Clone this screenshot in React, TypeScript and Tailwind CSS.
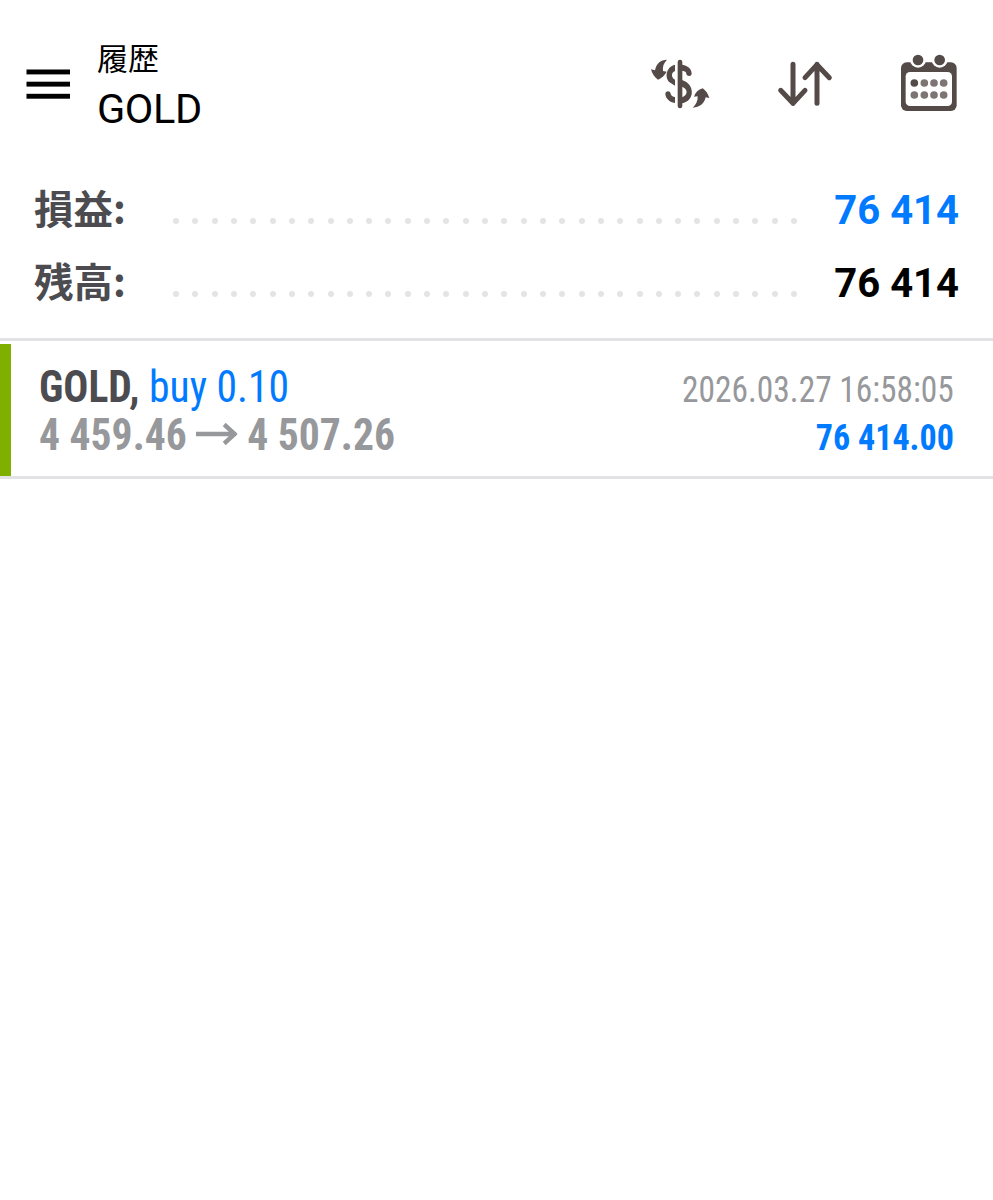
import type { ReactNode } from 'react';

interface SummaryRowProps {
  label: string;
  value: string;
  valueClass: string;
}

const DOT_COUNT = 33;

function MenuIcon() {
  return (
    <svg className="h-[30px] w-[44px]" viewBox="0 0 44 30" fill="#000">
      <rect x="0.5" y="0.5" width="43.5" height="4.9" />
      <rect x="0.5" y="12.7" width="43.5" height="4.9" />
      <rect x="0.5" y="24.8" width="43.5" height="4.9" />
    </svg>
  );
}

function CurrencyIcon() {
  return (
    <svg className="h-[75px] w-[80px]" viewBox="0 0 240 225" fill="none">
      <path d="M120 51V183" stroke="#544a48" strokeWidth="14" strokeLinecap="round" />
      <path d="M105 59C78 65 72 101 91 113L105 122V104C92 97 94 82 105 78Z" fill="#544a48" />
      <path d="M126 59C146 62 155 73 155 86C154 95 141 95 139 87C139 81 136 78 126 77Z" fill="#544a48" />
      <path d="M126 105C166 117 165 168 126 175V157C145 150 144 131 126 125Z" fill="#544a48" />
      <path d="M105 174C88 172 77 160 76 147C76 137 90 136 92 146C93 151 98 155 105 156Z" fill="#544a48" />
      <path d="M81 44C62 44 49 55 45 76L33 73C36 86 43 96 54 104C66 99 74 91 80 80L69 78C67 64 72 53 81 44Z" fill="#544a48" />
      <path d="M158 188C168 179 174 168 173 154L162 155C166 142 175 134 188 130C198 137 204 146 208 159L197 157C193 176 179 187 158 188Z" fill="#544a48" />
    </svg>
  );
}

function SortIcon() {
  return (
    <svg
      className="h-[75px] w-[80px]"
      viewBox="0 0 240 225"
      fill="none"
      stroke="#544a48"
      strokeWidth="15"
      strokeLinecap="round"
      strokeLinejoin="round"
    >
      <path d="M69 58V175M32 136L69 175L105 136" />
      <path d="M141 175V58M105 98L141 59L178 98" />
    </svg>
  );
}

function CalendarIcon() {
  return (
    <svg className="h-[75px] w-[80px]" viewBox="0 0 240 225">
      <rect x="33" y="52" width="167" height="146" rx="17" fill="#544a48" />
      <circle cx="84" cy="44" r="24" fill="#fff" />
      <circle cx="149" cy="44" r="24" fill="#fff" />
      <circle cx="84" cy="45" r="16" fill="#544a48" />
      <circle cx="149" cy="45" r="16" fill="#544a48" />
      <rect x="47" y="81" width="139" height="102" rx="13" fill="#fff" />
      {[73, 103, 132, 161].map((x, i) => (
        <g key={x}>
          <circle cx={x} cy="114" r="11.5" fill={i === 0 ? '#544a48' : '#7c7573'} />
          <circle cx={x} cy="150" r="11.5" fill="#7c7573" />
        </g>
      ))}
    </svg>
  );
}

function IconButton({ children, label }: { children: ReactNode; label: string }) {
  return (
    <button type="button" aria-label={label} className="shrink-0">
      {children}
    </button>
  );
}

function SummaryRow({ label, value, valueClass }: SummaryRowProps) {
  return (
    <div className="flex h-[73px] items-center">
      <div className="w-[139px] shrink-0 pb-[7px] font-['Noto_Sans_CJK_JP',sans-serif] text-[39.5px] leading-none font-bold text-[#4b4b50]">
        {label}
      </div>
      <div className="mt-[21px] flex w-[624px] shrink-0 justify-between">
        {Array.from({ length: DOT_COUNT }, (_, i) => (
          <span key={i} className="size-[6px] rounded-full bg-[#e4e4e6]" />
        ))}
      </div>
      <div className={`flex-1 text-right text-[40px] leading-none font-bold ${valueClass}`}>{value}</div>
    </div>
  );
}

export default function App() {
  return (
    <div className="h-[1200px] w-[993px] overflow-hidden bg-white font-['Roboto',sans-serif] text-black">
      <header className="flex h-[174px] items-start">
        <div className="ml-[26px] mt-[69px]">
          <MenuIcon />
        </div>
        <div className="ml-[27px] mt-[38px] flex-1">
          <div className="h-[38px] font-['Noto_Sans_CJK_JP',sans-serif] text-[31px] leading-[38px]">履歴</div>
          <div className="mt-[3px] h-[60px] text-[41.5px] leading-[60px] tracking-[-0.4px]">GOLD</div>
        </div>
        <div className="mr-[23px] mt-[45px] flex items-start">
          <IconButton label="通貨"><CurrencyIcon /></IconButton>
          <div className="mr-[40px] ml-[50px]">
            <IconButton label="並べ替え"><SortIcon /></IconButton>
          </div>
          <IconButton label="期間"><CalendarIcon /></IconButton>
        </div>
      </header>

      <section className="h-[164px] px-[34px]">
        <SummaryRow label="損益:" value="76 414" valueClass="text-[#007aff]" />
        <SummaryRow label="残高:" value="76 414" valueClass="text-black" />
      </section>

      <section className="flex h-[141px] border-y-[3px] border-[#e3e3e5] pt-[3px] font-['Roboto_Condensed','Roboto',sans-serif] font-stretch-condensed">
        <div className="w-[11px] bg-[#7fb000]" />
        <div className="flex flex-1 justify-between pt-[19px] pr-[39px] pl-[28px]">
          <div className="origin-left scale-x-[0.945] text-[44px] leading-[48px] whitespace-nowrap">
            <div>
              <span className="font-bold text-[#4b4b50]">GOLD,</span>{' '}
              <span className="text-[#007aff]">buy 0.10</span>
            </div>
            <div className="flex items-center font-bold text-[#97989b]">
              <span>4 459.46</span>
              <svg className="mr-[10px] mb-[3px] ml-[10px] h-[22px] w-[44px]" viewBox="0 0 44 22" fill="none" stroke="#97989b" strokeWidth="4.6">
                <path d="M0 11H41M30 1.5L41 11L30 20.5" />
              </svg>
              <span>4 507.26</span>
            </div>
          </div>
          <div className="pt-[3px] text-right text-[36px] leading-[48px] whitespace-nowrap">
            <div className="origin-right scale-x-[0.928] text-[#97989b]">2026.03.27 16:58:05</div>
            <div className="origin-right scale-x-[0.945] font-bold text-[#007aff]">76 414.00</div>
          </div>
        </div>
      </section>
    </div>
  );
}
